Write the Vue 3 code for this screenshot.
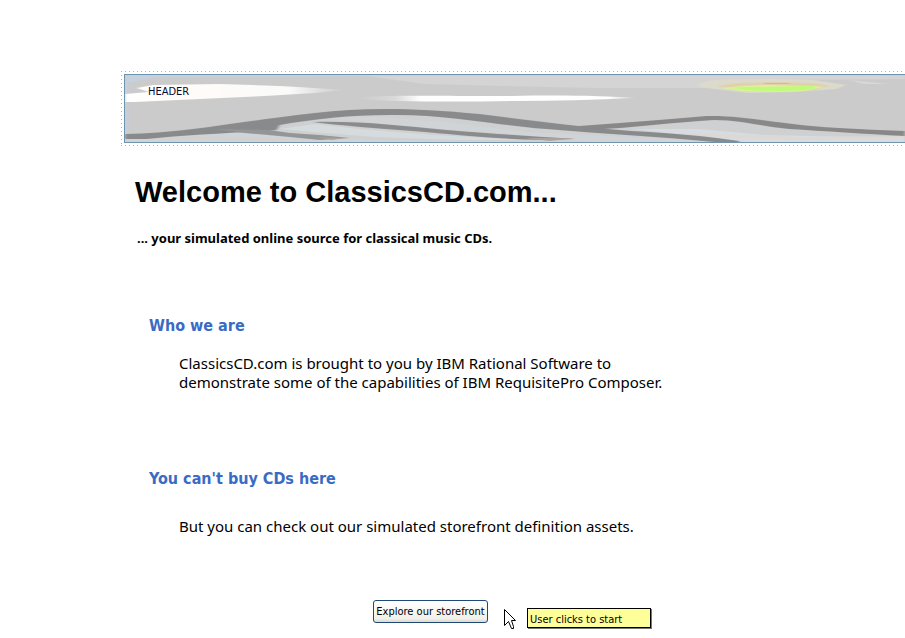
<script setup>
const sections = [
  {
    title: 'Who we are',
    body: 'ClassicsCD.com is brought to you by IBM Rational Software to demonstrate some of the capabilities of IBM RequisitePro Composer.',
    tight: true,
  },
  {
    title: "You can't buy CDs here",
    body: 'But you can check out our simulated storefront definition assets.',
    tight: false,
  },
]
</script>

<template>
  <div class="page">
    <header class="frame">
      <div class="banner">
        <svg class="art" viewBox="0 0 781 67" preserveAspectRatio="none" aria-hidden="true">
          <defs>
            <linearGradient id="streak" gradientUnits="userSpaceOnUse" x1="0" x2="220" y1="0" y2="0">
              <stop offset="0" stop-color="#fff" />
              <stop offset="0.4" stop-color="#fefbf8" />
              <stop offset="0.75" stop-color="#fafafa" />
              <stop offset="0.9" stop-color="#dcdcdc" />
              <stop offset="1" stop-color="#cbcbcb" />
            </linearGradient>
            <linearGradient id="center" gradientUnits="userSpaceOnUse" x1="235" x2="512" y1="0" y2="0">
              <stop offset="0" stop-color="#cbcbcb" />
              <stop offset="0.13" stop-color="#dadada" />
              <stop offset="0.22" stop-color="#fff" />
              <stop offset="0.9" stop-color="#fff" />
              <stop offset="1" stop-color="#cfcfcf" />
            </linearGradient>
            <filter id="soft" x="-5%" y="-20%" width="110%" height="140%">
              <feGaussianBlur stdDeviation="1.5 0.5" />
            </filter>
          </defs>
          <rect width="781" height="67" fill="#cbcbcb" />
          <g filter="url(#soft)">
            <path d="M235 0H781V4L660 5L590 13L470 13L380 11L300 9Z" fill="#d4d4d5" />
            <path d="M0 0H781V1H300L30 2L3 8V67H0Z" fill="#c5d1dc" />
            <path d="M0 67V62L57 58L130 54L190 44L260 38L322 42L388 50L455 56L500 53L582 43L632 48L715 56L781 60V67Z" fill="#cfd0d1" />
            <path d="M0 67V63L57 60L110 57L170 62L250 65L380 66V67Z" fill="#cdd4da" />
            <path d="M155 54L190 49L235 54L310 60L400 65L330 65L250 62L200 58Z" fill="#d6dbde" />
            <path d="M205 43L250 42L320 47L400 57L520 63L600 67H470L380 58L290 52Z" fill="#d1d4d7" />
            <path d="M510 54L575 54L640 60L781 63V67H615L560 60Z" fill="#d8dce1" />
            <path d="M548 58L600 59L680 62L781 61V63L680 65L600 63Z" fill="#dcd8d5" />
            <path d="M22 64L70 61L145 63L215 65L145 66Z" fill="#d6d0cd" />
            <path d="M12 13L28 10L95 9L155 11L190 13L220 15L190 18L140 21L75 24L10 27H0V19L24 17Z" fill="url(#streak)" />
            <path d="M235 22C270 20 300 21 388 21C440 20 480 21 512 23C470 25 430 26 388 26C330 27 270 27 235 24Z" fill="url(#center)" />
            <path d="M575 8L590 5L645 4L690 5L722 10L712 14L670 17L624 18L590 14L575 12Z" fill="#dbdacd" />
            <path d="M593 11L612 8L650 7L690 8L706 11L690 15L653 16L610 15Z" fill="#e2d0ae" />
            <path d="M597 13L618 11L640 10L690 11L700 12L680 16L650 17L618 16Z" fill="#dcf19a" />
            <path d="M606 13L618 12L640 12L690 11L692 13L680 15L650 16L622 15Z" fill="#befc78" />
            <path d="M640 8H665V9H640Z" fill="#b9bdc4" />
            <path d="M725 5L755 8L765 9L740 9Z" fill="#d8d8d8" />
            <path d="M0 59C60 58 110 47 190 38C240 32 290 33 355 39C420 47 470 54 525 57Q575 60 615 66V67H590C540 62 480 59 422 54C370 50 320 39 265 40C225 40 190 44 155 50L152 55C110 58 60 60 22 64H0Z" fill="#898a8b" />
            <path d="M90 54L145 55L165 58L195 60L225 63L195 65L165 62L120 58Z" fill="#949596" />
            <path d="M188 47C240 46 275 51 322 55C370 59 410 61 450 64C390 67 340 60 288 56C250 53 220 51 188 47Z" fill="#898b8c" />
            <path d="M455 51C500 48 545 44 582 41C620 40 650 49 715 53Q748 55 781 56V61C740 59 700 56 665 54C635 51 615 45 590 45C550 47 510 53 460 55Z" fill="#888" />
            <path d="M192 62L218 63L208 65ZM400 63L450 63L425 66Z" fill="#aaa19c" />
          </g>
        </svg>
        <span class="label">HEADER</span>
      </div>
    </header>

    <main class="content">
      <h1>Welcome to ClassicsCD.com...</h1>
      <p class="tagline">... your simulated online source for classical music CDs.</p>

      <section v-for="s in sections" :key="s.title" :class="{ tight: s.tight }">
        <h2>{{ s.title }}</h2>
        <p>{{ s.body }}</p>
      </section>

      <div class="actions">
        <button type="button">Explore our storefront</button>
        <svg class="cursor" width="12" height="21" viewBox="0 0 12 21" aria-hidden="true">
          <path d="M0.5 0.5V16.5L4.5 12.5L7.5 19.5H9.5V17.5L7.5 11.5H11.5Z" fill="#fff" stroke="#000" />
        </svg>
        <div class="note" role="note">User clicks to start</div>
      </div>
    </main>
  </div>
</template>

<style>
body {
  margin: 0;
  background: #fff;
}
</style>

<style scoped>
.page {
  padding: 71px 0 8px 121px;
  overflow: hidden;
  color: #000;
  font-family: "Noto Sans", sans-serif;
}

.frame {
  padding: 3px 0 3px 3px;
  background:
    repeating-linear-gradient(90deg, #9fb8c8 0 1px, transparent 1px 4px) 0 0 / 100% 1px no-repeat,
    repeating-linear-gradient(90deg, #9fb8c8 0 1px, transparent 1px 4px) 0 100% / 100% 1px no-repeat,
    repeating-linear-gradient(180deg, #9fb8c8 0 1px, transparent 1px 4px) 0 0 / 1px 100% no-repeat;
}

.banner {
  position: relative;
  height: 67px;
  border: 1px solid #6f93ad;
  border-right: 0;
}

.art {
  display: block;
  width: 100%;
  height: 100%;
}

.label {
  position: absolute;
  top: 10px;
  left: 23px;
  font-family: "DejaVu Sans Condensed", sans-serif;
  font-size: 11px;
  line-height: 14px;
  color: #0a0a32;
}

.content {
  padding: 28px 16px 0 14px;
}

h1 {
  margin: 0;
  font: bold 29px/36px "Liberation Sans", Arial, sans-serif;
}

.tagline {
  margin: 20px 0 0 2px;
  font-size: 13px;
  line-height: 16px;
  font-weight: bold;
}

section {
  margin: 77px 0 0 14px;
}

.tight {
  margin-top: 70px;
}

h2 {
  margin: 0;
  font-family: "DejaVu Sans Condensed", sans-serif;
  font-size: 16px;
  line-height: 20px;
  font-weight: bold;
  color: #3a6bc4;
}

section p {
  max-width: 500px;
  margin: 28px 0 0 30px;
  font-size: 15px;
  line-height: 19px;
}

.tight p {
  margin-top: 18px;
}

.actions {
  display: flex;
  align-items: flex-start;
  margin: 64px 0 0 238px;
}

button {
  height: 23px;
  width: 115px;
  padding: 1px 0 0;
  border: 1px solid #1f4a78;
  border-radius: 3px;
  background: linear-gradient(#fff, #f1f0ea 85%, #dcd7cc);
  color: #000;
  font: 11px/14px "DejaVu Sans Condensed", sans-serif;
  white-space: nowrap;
}

.cursor {
  flex: none;
  margin: 9px 0 0 16px;
}

.note {
  box-sizing: border-box;
  width: 124px;
  height: 20px;
  margin: 8px 0 0 11px;
  padding: 3px 2px 0;
  border: 1px solid #000;
  background: #ffff99;
  box-shadow: 1px 1px 0 #777;
  font-family: "DejaVu Sans Condensed", sans-serif;
  font-size: 11px;
  line-height: 16px;
}
</style>
